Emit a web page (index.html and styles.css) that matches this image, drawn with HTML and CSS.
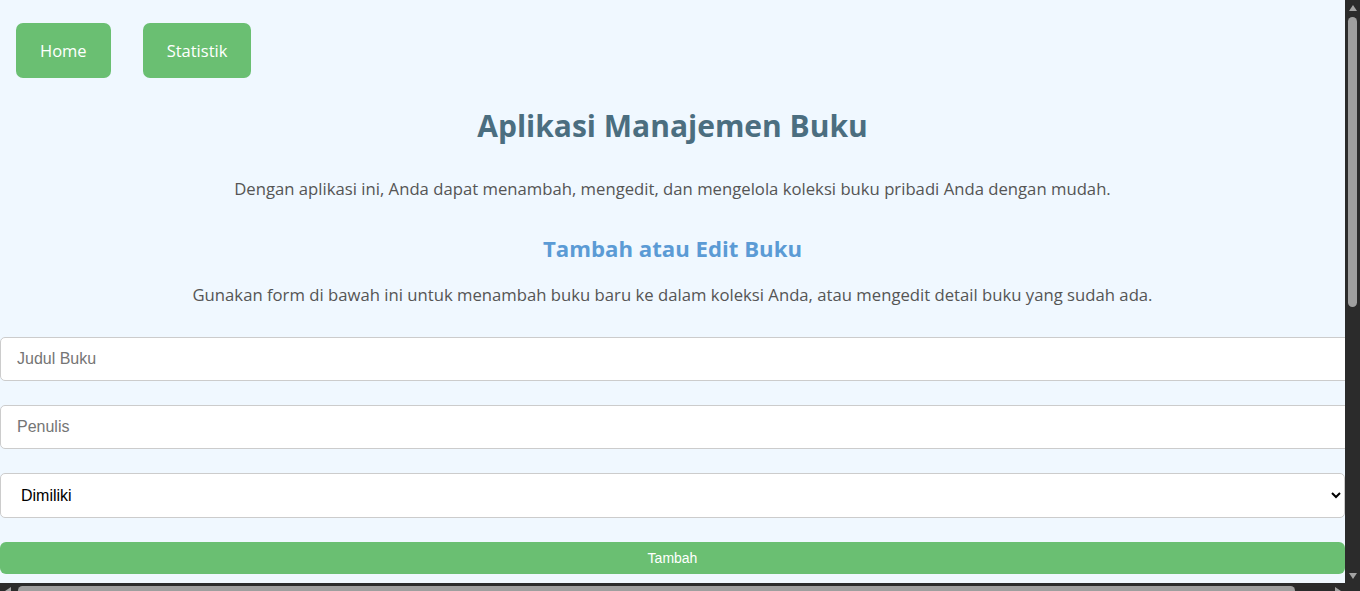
FILE: index.html
```html
<!DOCTYPE html>
<html lang="id">
<head>
<meta charset="utf-8">
<title>Aplikasi Manajemen Buku</title>
<link rel="stylesheet" href="styles.css">
</head>
<body>
<div class="window">
  <div class="viewport">
    <nav class="nav">
      <a class="nav-btn" href="#">Home</a>
      <a class="nav-btn" href="#">Statistik</a>
    </nav>
    <main class="main">
      <h1 class="title">Aplikasi Manajemen Buku</h1>
      <p class="lead">Dengan aplikasi ini, Anda dapat menambah, mengedit, dan mengelola koleksi buku pribadi Anda dengan mudah.</p>
      <h2 class="subtitle">Tambah atau Edit Buku</h2>
      <p class="lead">Gunakan form di bawah ini untuk menambah buku baru ke dalam koleksi Anda, atau mengedit detail buku yang sudah ada.</p>
      <form class="form">
        <input class="field" type="text" placeholder="Judul Buku">
        <input class="field" type="text" placeholder="Penulis">
        <select class="select">
          <option>Dimiliki</option>
          <option>Dipinjam</option>
          <option>Ingin Dibeli</option>
        </select>
        <button class="submit" type="button">Tambah</button>
      </form>
    </main>
  </div>
  <div class="vbar" aria-hidden="true">
    <span class="arrow arrow-up"></span>
    <span class="vthumb"></span>
    <span class="bar-fill"></span>
    <span class="arrow arrow-down"></span>
  </div>
  <div class="hbar" aria-hidden="true">
    <span class="arrow arrow-left"></span>
    <span class="hthumb"></span>
    <span class="bar-fill"></span>
    <span class="arrow arrow-right"></span>
  </div>
  <div class="corner" aria-hidden="true"></div>
</div>
</body>
</html>
```

FILE: styles.css
```css
html, body {
  margin: 0;
  padding: 0;
}
body {
  overflow: hidden;
  background: #f0f8ff;
  font-family: "Open Sans", "Noto Sans", sans-serif;
  color: #555;
}
.window {
  display: grid;
  grid-template-columns: 1fr 15px;
  grid-template-rows: 1fr 15px;
  height: calc(100vh + 7px);
}
.viewport {
  overflow: hidden;
  min-width: 0;
  background: #f0f8ff;
}

/* scrollbars */
.vbar, .hbar, .corner {
  background: #2b2b2b;
}
.vbar {
  display: flex;
  flex-direction: column;
  align-items: center;
}
.hbar {
  display: flex;
  align-items: center;
}
.bar-fill {
  flex: 1;
}
.arrow {
  flex: 0 0 15px;
  width: 15px;
  height: 15px;
  display: flex;
  align-items: center;
  justify-content: center;
}
.arrow::before {
  content: "";
  width: 0;
  height: 0;
}
.arrow-up::before {
  border-left: 4.5px solid transparent;
  border-right: 4.5px solid transparent;
  border-bottom: 6px solid #a3a3a3;
}
.arrow-down::before {
  border-left: 4.5px solid transparent;
  border-right: 4.5px solid transparent;
  border-top: 6px solid #a3a3a3;
}
.arrow-left::before {
  border-top: 4.5px solid transparent;
  border-bottom: 4.5px solid transparent;
  border-right: 6px solid #a3a3a3;
}
.arrow-right::before {
  border-top: 4.5px solid transparent;
  border-bottom: 4.5px solid transparent;
  border-left: 6px solid #a3a3a3;
}
.vthumb {
  width: 9px;
  height: 290px;
  margin-top: 2px;
  border-radius: 5px;
  background: #9f9f9f;
}
.hthumb {
  height: 9px;
  width: 1277px;
  margin-left: 3px;
  border-radius: 5px;
  background: #9f9f9f;
}

/* page */
.nav {
  display: flex;
  gap: 32px;
  padding: 23px 16px 0;
}
.nav-btn {
  display: inline-block;
  background: #6abf72;
  color: #fff;
  text-decoration: none;
  font-size: 16.5px;
  line-height: 24px;
  padding: 16px 24px 15px;
  border-radius: 7px;
}
.main {
  text-align: center;
}
.title {
  color: #4b6e80;
  font-size: 30px;
  font-weight: 700;
  margin: 28px 0 0;
  line-height: 40px;
}
.lead {
  font-size: 16.7px;
  line-height: 24px;
  margin: 31px 0 0;
}
.subtitle {
  color: #5b9bd5;
  font-size: 22.2px;
  font-weight: 700;
  line-height: 32px;
  margin: 32px 0 0;
}
.subtitle + .lead {
  margin-top: 18px;
}
.form {
  margin-top: 30px;
  text-align: left;
}
.field {
  display: block;
  width: 100%;
  box-sizing: content-box;
  padding: 12px 16px;
  margin: 0 0 24px;
  border: 1px solid #ccc;
  border-radius: 5px;
  font-family: "Liberation Sans", Arial, sans-serif;
  font-size: 16px;
  line-height: 18px;
  background: #fff;
  color: #333;
}
.field::placeholder {
  color: #757575;
}
.select {
  display: block;
  width: 100%;
  box-sizing: border-box;
  height: 45px;
  padding: 0 16px;
  margin: 0 0 24px;
  border: 1px solid #ccc;
  border-radius: 5px;
  font-family: "Liberation Sans", Arial, sans-serif;
  font-size: 16px;
  background: #fff;
  color: #000;
}
.submit {
  display: block;
  width: 100%;
  height: 32px;
  border: none;
  border-radius: 6px;
  background: #6abf72;
  color: #fff;
  font-family: "Liberation Sans", Arial, sans-serif;
  font-size: 14px;
  margin: 0 0 20px;
}
```
